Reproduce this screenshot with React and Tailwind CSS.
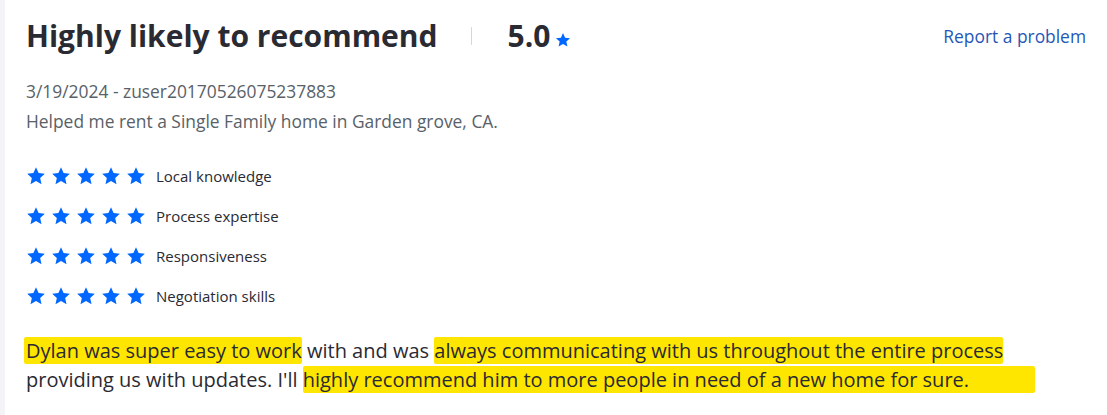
function Star({ size = 20 }) {
  return (
    <svg width={size} height={size} viewBox="0 0 24 24" className="shrink-0">
      <path
        fill="#0067ff"
        d="M12 1.6l3.1 6.9 7.5.8-5.6 5.1 1.6 7.4L12 18l-6.6 3.8 1.6-7.4-5.6-5.1 7.5-.8z"
      />
    </svg>
  );
}

const ratings = [
  "Local knowledge",
  "Process expertise",
  "Responsiveness",
  "Negotiation skills",
];

function Mark({ children, className = "" }) {
  return (
    <span className={"bg-[#ffe600] box-decoration-clone rounded-[2px] " + className}>
      {children}
    </span>
  );
}

export default function App() {
  return (
    <div
      className="flex min-h-[415px] w-full bg-white text-[#2a2a33]"
      style={{ fontFamily: '"Open Sans", "Liberation Sans", sans-serif' }}
    >
      {/* left rail */}
      <div className="w-[5px] shrink-0 bg-[#f3f3f8]" />

      <div className="flex-1 pl-[21px] pr-[21px] pt-[14px]">
        {/* HEADER */}
        <div className="flex items-center h-[44px]">
          <h1 className="text-[30px] font-bold leading-none">
            Highly likely to recommend
          </h1>
          <div className="ml-[33px] w-px h-[18px] bg-[#d6d6dc]" />
          <span className="ml-[36px] text-[30px] font-bold leading-none">5.0</span>
          <span className="ml-[5px] mt-[8px]">
            <Star size={16} />
          </span>
          <a href="#" className="ml-auto text-[17.4px] text-[#1f58b9]">
            Report a problem
          </a>
        </div>

        {/* META */}
        <div className="mt-[18px] text-[17.4px] leading-[30px] text-[#596168]">
          <p>3/19/2024 - zuser20170526075237883</p>
          <p>Helped me rent a Single Family home in Garden grove, CA.</p>
        </div>

        {/* SUB RATINGS */}
        <div className="mt-[29px] flex flex-col gap-[18px]">
          {ratings.map((r) => (
            <div key={r} className="flex items-center h-[22px]">
              <div className="flex gap-[5px]">
                {[0, 1, 2, 3, 4].map((i) => (
                  <Star key={i} />
                ))}
              </div>
              <span className="ml-[10px] text-[15px]">{r}</span>
            </div>
          ))}
        </div>

        {/* REVIEW */}
        <p className="mt-[29px] text-[20px] leading-[29px]">
          <Mark className="-ml-[2px] pl-[2px]">Dylan was super easy to work</Mark> with and was{" "}
          <Mark>always communicating with us throughout the entire process</Mark>{" "}
          providing us with updates. I'll{" "}
          <Mark className="pr-[66px]">
            highly recommend him to more people in need of a new home for sure.
          </Mark>
        </p>
      </div>
    </div>
  );
}
